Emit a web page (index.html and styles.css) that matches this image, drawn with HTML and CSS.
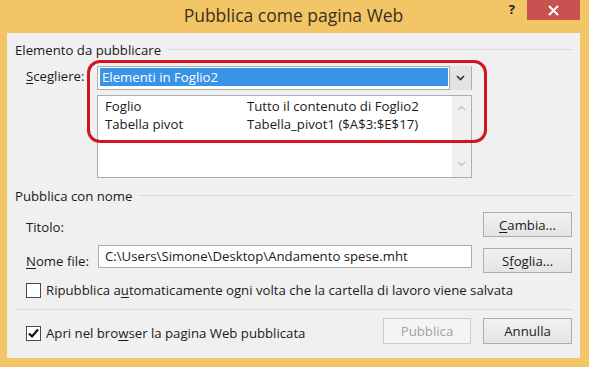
FILE: index.html
```html
<!DOCTYPE html>
<html lang="it">
<head>
<meta charset="utf-8">
<title>Pubblica come pagina Web</title>
<link rel="stylesheet" href="styles.css">
</head>
<body>
<div class="window">
  <div class="titlebar">
    <div></div>
    <div class="title">Pubblica come pagina Web</div>
    <div class="caption-btns">
      <span class="help">?</span>
      <span class="close">
        <svg width="11" height="11" viewBox="0 0 11 11"><path d="M1 1 L10 10 M10 1 L1 10" stroke="#fff" stroke-width="2" fill="none"/></svg>
      </span>
    </div>
  </div>
  <div class="client">
    <div class="group-head"><span>Elemento da pubblicare</span><span class="rule"></span></div>
    <div class="row choose-row">
      <span class="label"><u>S</u>cegliere:</span>
      <div class="chooser">
        <div class="combo">
          <div class="combo-value">Elementi in Foglio2</div>
          <div class="combo-btn">
            <svg width="9" height="6" viewBox="0 0 9 6"><path d="M1 1 L4.5 4.5 L8 1" stroke="#333" stroke-width="1.7" fill="none"/></svg>
          </div>
        </div>
        <div class="listbox">
          <div class="items">
            <div class="item"><span class="c1">Foglio</span><span>Tutto il contenuto di Foglio2</span></div>
            <div class="item"><span class="c1">Tabella pivot</span><span>Tabella_pivot1 ($A$3:$E$17)</span></div>
          </div>
          <div class="vscroll">
            <svg width="9" height="6" viewBox="0 0 9 6"><path d="M1 5 L4.5 1.5 L8 5" stroke="#c2c2c2" stroke-width="1.4" fill="none"/></svg>
            <svg width="9" height="6" viewBox="0 0 9 6"><path d="M1 1 L4.5 4.5 L8 1" stroke="#c2c2c2" stroke-width="1.4" fill="none"/></svg>
          </div>
        </div>
        <div class="highlight"></div>
      </div>
    </div>

    <div class="group-head second"><span>Pubblica con nome</span><span class="rule"></span></div>
    <div class="row title-row">
      <span class="label">Titolo:</span>
      <span class="spacer"></span>
      <button class="btn"><u>C</u>ambia...</button>
    </div>
    <div class="row file-row">
      <span class="label"><u>N</u>ome file:</span>
      <div class="textbox">C:\Users\Simone\Desktop\Andamento spese.mht</div>
      <button class="btn offset">S<u>f</u>oglia...</button>
    </div>
    <div class="check-row">
      <span class="box"></span>
      <span>Ripubblica a<u>u</u>tomaticamente ogni volta che la cartella di lavoro viene salvata</span>
    </div>
    <div class="separator"></div>
    <div class="row bottom-row">
      <div class="check-row inline">
        <span class="box">
          <svg width="13" height="13" viewBox="0 0 13 13"><path d="M2 6.5 L5 9.5 L11 2.5" stroke="#111" stroke-width="2.2" fill="none"/></svg>
        </span>
        <span>Apri nel bro<u>w</u>ser la pagina Web pubblicata</span>
      </div>
      <span class="spacer"></span>
      <button class="btn disabled">Pubblica</button>
      <button class="btn">Annulla</button>
    </div>
  </div>
</div>
</body>
</html>
```
FILE: styles.css
```css
html, body {
  margin: 0;
  padding: 0;
}
body {
  width: 589px;
  height: 367px;
  overflow: hidden;
  font-family: "Open Sans", "Noto Sans", sans-serif;
  font-size: 13.2px;
  color: #1a1a1a;
}
u { text-decoration: underline; text-underline-offset: 2px; }

.window {
  width: 589px;
  height: 367px;
  background: #f2c566;
  display: flex;
  flex-direction: column;
  box-sizing: border-box;
  padding: 0 9px 9px 7px;
}
.titlebar {
  height: 33px;
  display: grid;
  grid-template-columns: 1fr auto 1fr;
  align-items: start;
}
.title {
  font-size: 17.5px;
  color: #3a3120;
  padding-top: 4px;
  line-height: 22px;
}
.caption-btns {
  display: flex;
  justify-content: flex-end;
  align-items: flex-start;
}
.help {
  font-weight: bold;
  font-size: 13px;
  color: #222;
  line-height: 18px;
  margin-right: 12px;
}
.close {
  width: 53px;
  height: 20px;
  background: #c85250;
  display: flex;
  align-items: center;
  justify-content: center;
}

.client {
  flex: 1;
  background: #f0f0f0;
  padding: 9px 7px 0 8px;
  display: flex;
  flex-direction: column;
  line-height: 16px;
}
.group-head {
  display: flex;
  align-items: center;
  gap: 7px;
  color: #1a1a1a;
}
.group-head .rule {
  flex: 1;
  border-top: 1px solid #dcdcdc;
  margin-top: -2px;
}
.group-head.second { margin-top: 10px; }

.row {
  display: flex;
  padding-left: 11px;
}
.label { width: 71px; flex: none; }

.choose-row { margin-top: 8px; }
.choose-row .label { padding-top: 2px; }
.chooser {
  position: relative;
  width: 375px;
}
.combo {
  height: 24px;
  box-sizing: border-box;
  border: 1px solid #acacac;
  background: #fff;
  display: flex;
  padding: 1px 0 3px 2px;
}
.combo-value {
  flex: 1;
  background: #3993e6;
  color: #fff;
  padding-left: 2px;
  line-height: 18px;
}
.combo-btn {
  width: 21px;
  margin: -2px 0 -4px 1px;
  background: #e3e3e3;
  border-left: 1px solid #acacac;
  display: flex;
  align-items: center;
  justify-content: center;
}
.listbox {
  margin-top: 5px;
  height: 83px;
  box-sizing: border-box;
  border: 1px solid #abadb3;
  background: #fff;
  display: flex;
}
.items {
  flex: 1;
  padding: 1px 0 0 7px;
}
.item { display: flex; line-height: 18px; }
.item .c1 { width: 142px; }
.vscroll {
  width: 19px;
  background: #f0f0f0;
  display: flex;
  flex-direction: column;
  justify-content: space-between;
  align-items: center;
  padding: 9px 0 10px;
}
.highlight {
  position: absolute;
  left: -10px;
  top: -6px;
  width: 394px;
  height: 77px;
  border: 3px solid #d3141f;
  border-radius: 13px;
  pointer-events: none;
}

.spacer { flex: 1; }
.btn {
  font: inherit;
  color: #1a1a1a;
  width: 89px;
  height: 25px;
  box-sizing: border-box;
  border: 1px solid #adadad;
  background: linear-gradient(#f1f1f1, #e4e4e4);
  padding: 0;
  line-height: 16px;
  margin-right: 1px;
}
.title-row { margin-top: 8px; align-items: center; }
.title-row .label { padding-top: 4px; }
.file-row { margin-top: 8px; align-items: flex-start; }
.file-row .label { padding-top: 8px; }
.textbox {
  margin-left: 1px;
  width: 375px;
  height: 23px;
  box-sizing: border-box;
  border: 1px solid #abadb3;
  background: #fff;
  padding: 2px 0 0 6px;
  line-height: 17px;
  white-space: nowrap;
}
.btn.offset { margin-left: 11px; margin-top: 3px; }

.check-row {
  display: flex;
  align-items: center;
  gap: 5px;
  padding-left: 11px;
  margin-top: 9px;
}
.check-row.inline { padding-left: 0; margin-top: 4px; }
.box {
  width: 15px;
  height: 15px;
  box-sizing: border-box;
  border: 1px solid #4a4a4a;
  background: #fff;
  display: flex;
  align-items: center;
  justify-content: center;
}
.separator {
  border-top: 1px solid #dcdcdc;
  margin-top: 11px;
}
.bottom-row {
  margin-top: 8px;
  align-items: center;
}
.bottom-row .btn { height: 26px; }
.btn.disabled {
  color: #a3a3a3;
  border-color: #cbcbcb;
  background: #f4f4f4;
  width: 88px;
  margin-right: 12px;
}
```
